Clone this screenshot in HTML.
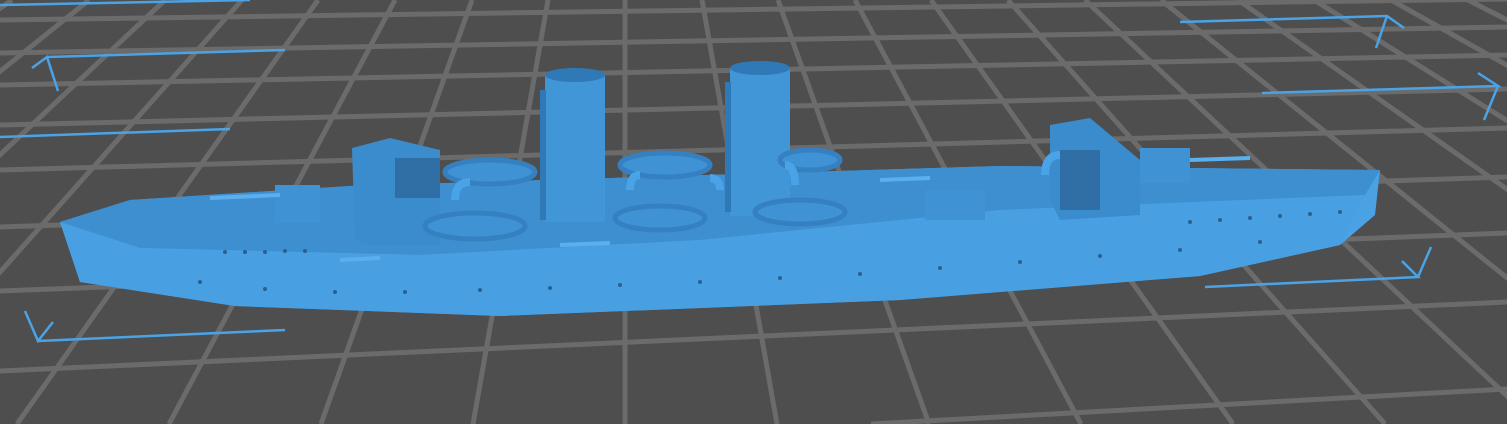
<!DOCTYPE html><html><head><style>html,body{margin:0;padding:0;background:#4e4e4e;overflow:hidden;width:1507px;height:424px}svg{display:block}</style></head><body>
<svg width="1507" height="424" viewBox="0 0 1507 424" xmlns="http://www.w3.org/2000/svg">
<rect width="1507" height="424" fill="#4e4e4e"/>
<g stroke="#6b6b6b" stroke-width="5" fill="none">
<line x1="0" y1="20" x2="1507" y2="-1"/>
<line x1="0" y1="53" x2="1507" y2="27"/>
<line x1="0" y1="85" x2="1507" y2="55"/>
<line x1="0" y1="125" x2="1507" y2="89"/>
<line x1="0" y1="170" x2="1507" y2="128"/>
<line x1="0" y1="227" x2="1507" y2="177"/>
<line x1="0" y1="291" x2="1507" y2="233"/>
<line x1="0" y1="371" x2="1507" y2="302"/>
<line x1="871" y1="424" x2="1507" y2="389"/>
<line x1="12" y1="0" x2="-591" y2="424"/>
<line x1="89" y1="0" x2="-439" y2="424"/>
<line x1="165" y1="0" x2="-287" y2="424"/>
<line x1="242" y1="0" x2="-135" y2="424"/>
<line x1="318" y1="0" x2="17" y2="424"/>
<line x1="395" y1="0" x2="169" y2="424"/>
<line x1="472" y1="0" x2="321" y2="424"/>
<line x1="548" y1="0" x2="473" y2="424"/>
<line x1="625" y1="0" x2="625" y2="424"/>
<line x1="702" y1="0" x2="777" y2="424"/>
<line x1="778" y1="0" x2="929" y2="424"/>
<line x1="855" y1="0" x2="1081" y2="424"/>
<line x1="931" y1="0" x2="1233" y2="424"/>
<line x1="1008" y1="0" x2="1385" y2="424"/>
<line x1="1085" y1="0" x2="1537" y2="424"/>
<line x1="1161" y1="0" x2="1689" y2="424"/>
<line x1="1238" y1="0" x2="1841" y2="424"/>
<line x1="1314" y1="0" x2="1993" y2="424"/>
<line x1="1391" y1="0" x2="2145" y2="424"/>
<line x1="1468" y1="0" x2="2297" y2="424"/>
</g>
<g stroke="#4aa3e6" stroke-width="2.5" fill="none">
<line x1="0" y1="5" x2="250" y2="0"/>
<path d="M32 68 L47 57 L58 91 M47 57 L285 50"/>
<line x1="0" y1="137" x2="230" y2="129"/>
<path d="M25 311 L38 341 L53 322 M38 341 L285 330"/>
<path d="M1180 22 L1387 16 L1404 28 M1387 16 L1376 48"/>
<path d="M1262 93 L1498 86 L1478 73 M1498 86 L1484 120"/>
<path d="M1205 287 L1418 277 L1402 261 M1418 277 L1431 247"/>
</g>
<path d="M60 222 L130 200 L350 186 L1000 166 L1380 170 L1375 215 L1340 245 L1200 276 L900 300 L500 316 L235 306 L80 282 Z" fill="#4aa2e4"/>
<path d="M60 222 L130 200 L350 186 L1000 166 L1380 170 L1365 195 L1000 210 L700 240 L420 255 L140 248 Z" fill="#3d8fd0"/>
<path d="M60 222 L140 248 L420 255 L700 240 L1000 210 L1365 195 L1340 245 L1200 276 L900 300 L500 316 L235 306 L80 282 Z" fill="#48a0e2"/>
<rect x="275" y="185" width="45" height="38" fill="#3f93d4"/>
<path d="M352 148 L390 138 L440 150 L440 245 L370 245 L355 240 Z" fill="#3b8ccd"/>
<rect x="395" y="158" width="45" height="40" fill="#2f6fa6"/>
<path d="M1050 125 L1090 118 L1140 160 L1140 215 L1060 220 L1050 200 Z" fill="#3b8ccd"/>
<rect x="1060" y="150" width="40" height="60" fill="#2f6fa6"/>
<rect x="1140" y="148" width="50" height="35" fill="#3f93d4"/>
<rect x="925" y="190" width="60" height="30" fill="#3f93d4"/>
<rect x="545" y="75" width="60" height="147" fill="#4196d8"/>
<ellipse cx="575" cy="75" rx="30" ry="7" fill="#2f79b6"/>
<rect x="540" y="90" width="6" height="130" fill="#2f79b6"/>
<rect x="730" y="68" width="60" height="148" fill="#4196d8"/>
<ellipse cx="760" cy="68" rx="30" ry="7" fill="#2f79b6"/>
<rect x="725" y="82" width="6" height="130" fill="#2f79b6"/>
<g fill="#3f93d4" stroke="#3580c0" stroke-width="5">
<ellipse cx="490" cy="172" rx="45" ry="12"/>
<ellipse cx="665" cy="165" rx="45" ry="12"/>
<ellipse cx="810" cy="160" rx="30" ry="10"/>
<ellipse cx="475" cy="226" rx="50" ry="13"/>
<ellipse cx="660" cy="218" rx="45" ry="12"/>
<ellipse cx="800" cy="212" rx="45" ry="12"/>
</g>
<g stroke="#4aa3e6" stroke-width="8" fill="none">
<path d="M455 200 Q455 182 470 182"/><path d="M630 190 Q630 175 640 175"/><path d="M720 190 Q720 178 710 178"/><path d="M795 185 Q795 165 785 165"/><path d="M1045 175 Q1045 155 1060 155"/>
</g>
<g stroke="#5ab0ee" stroke-width="4">
<line x1="210" y1="198" x2="280" y2="195"/><line x1="1190" y1="160" x2="1250" y2="158"/><line x1="880" y1="180" x2="930" y2="178"/><line x1="340" y1="260" x2="380" y2="258"/><line x1="560" y1="245" x2="610" y2="243"/>
</g>
<g fill="#2a5f8f">
<circle cx="200" cy="282" r="2"/><circle cx="265" cy="289" r="2"/><circle cx="335" cy="292" r="2"/><circle cx="405" cy="292" r="2"/><circle cx="480" cy="290" r="2"/><circle cx="550" cy="288" r="2"/><circle cx="620" cy="285" r="2"/><circle cx="700" cy="282" r="2"/><circle cx="780" cy="278" r="2"/><circle cx="860" cy="274" r="2"/><circle cx="940" cy="268" r="2"/><circle cx="1020" cy="262" r="2"/><circle cx="1100" cy="256" r="2"/><circle cx="1180" cy="250" r="2"/><circle cx="1260" cy="242" r="2"/>
<circle cx="225" cy="252" r="2"/><circle cx="245" cy="252" r="2"/><circle cx="265" cy="252" r="2"/><circle cx="285" cy="251" r="2"/><circle cx="305" cy="251" r="2"/><circle cx="1190" cy="222" r="2"/><circle cx="1220" cy="220" r="2"/><circle cx="1250" cy="218" r="2"/><circle cx="1280" cy="216" r="2"/><circle cx="1310" cy="214" r="2"/><circle cx="1340" cy="212" r="2"/>
</g>
</svg>
</body></html>
